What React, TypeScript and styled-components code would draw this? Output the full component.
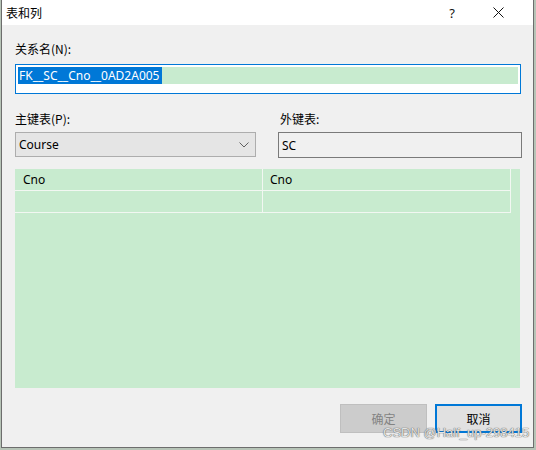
import React from 'react';
import styled, { createGlobalStyle } from 'styled-components';

const GlobalStyle = createGlobalStyle`
  html, body {
    margin: 0;
    padding: 0;
    background: #b7c4b7;
  }
  body {
    font-family: "Noto Sans", "Noto Sans CJK SC", sans-serif;
    font-size: 12px;
    color: #000;
  }
`;

const Window = styled.div`
  position: relative;
  box-sizing: border-box;
  margin-left: 1px;
  width: 533px;
  height: 448px;
  background: #f0f0f0;
  border: 1px solid #6d6d6d;
  border-top: none;
  display: flex;
  flex-direction: column;
`;

const TitleBar = styled.div`
  height: 25px;
  background: #fff;
  display: flex;
  align-items: center;
  padding: 0 12px 0 4px;
`;

const Title = styled.span`
  flex: 1;
  font-family: "Noto Sans CJK SC", sans-serif;
  font-size: 12px;
`;

const TitleButton = styled.div`
  width: 46px;
  height: 25px;
  display: flex;
  align-items: center;
  justify-content: center;
  font-size: 13px;
  color: #111;
`;

const Body = styled.div`
  flex: 1;
  display: flex;
  flex-direction: column;
  padding: 16px 12px 0 13px;
`;

const Label = styled.div<{ $indent?: number }>`
  font-family: "Noto Sans CJK SC", sans-serif;
  font-size: 12px;
  line-height: 16px;
  padding-left: ${p => p.$indent ?? 0}px;
`;

const NameInput = styled.div`
  box-sizing: border-box;
  margin-top: 7px;
  width: 506px;
  height: 30px;
  border: 1px solid #0078d7;
  background: #fff;
  padding: 2px 2px 0 2px;
`;

const HighlightLine = styled.div`
  height: 17px;
  background: #c8ebcf;
  display: flex;
`;

const Selection = styled.span`
  background: #0078d7;
  color: #fff;
  font-size: 12px;
  line-height: 17px;
  padding: 0 3px 0 1px;
`;

const KeyRow = styled.div`
  display: grid;
  grid-template-columns: 241px 244px;
  column-gap: 22px;
`;

const KeyLabels = styled(KeyRow)`
  margin-top: 17px;
`;

const KeyControls = styled(KeyRow)`
  margin-top: 5px;
`;

const Combo = styled.div`
  box-sizing: border-box;
  height: 25px;
  background: #e5e5e5;
  border: 1px solid #adadad;
  display: flex;
  align-items: center;
  justify-content: space-between;
  padding: 0 6px 0 3px;
  font-size: 12px;
`;

const ReadOnlyBox = styled.div`
  box-sizing: border-box;
  height: 26px;
  background: #f0f0f0;
  border: 1px solid #7a7a7a;
  display: flex;
  align-items: center;
  padding-left: 3px;
  font-size: 12px;
`;

const GridArea = styled.div`
  margin-top: 11px;
  width: 505px;
  height: 219px;
  background: #c8ebcf;
`;

const GridTable = styled.div`
  width: 497px;
  display: grid;
  grid-template-columns: 248px 248px;
`;

const Cell = styled.div<{ $last?: boolean }>`
  height: 21px;
  border-bottom: 1px solid #f2f7f2;
  border-right: 1px solid #f2f7f2;
  display: flex;
  align-items: center;
  padding-left: ${p => (p.$last ? 7 : 8)}px;
  font-size: 12px;
  line-height: 16px;
`;

const ButtonRow = styled.div`
  margin-top: 16px;
  display: flex;
  justify-content: flex-end;
  gap: 8px;
  width: 507px;
`;

const DialogButton = styled.div<{ $disabled?: boolean; $focused?: boolean }>`
  box-sizing: border-box;
  width: 87px;
  height: 29px;
  display: flex;
  align-items: center;
  justify-content: center;
  font-family: "Noto Sans CJK SC", sans-serif;
  font-size: 12px;
  line-height: 14px;
  background: ${p => (p.$disabled ? '#cccccc' : '#e1e1e1')};
  color: ${p => (p.$disabled ? '#838383' : '#000')};
  border: ${p => (p.$focused ? '2px solid #0078d7' : '1px solid #bfbfbf')};
`;

const Watermark = styled.div`
  position: absolute;
  left: 381px;
  top: 427px;
  font-family: "Liberation Sans", Arial, sans-serif;
  font-size: 13px;
  line-height: 12px;
  color: #e4e4e4;
  text-shadow: 0 0 1px #555, 0 0 1px #777;
  white-space: nowrap;
  pointer-events: none;
`;

const Chevron = () => (
  <svg width="10" height="6" viewBox="0 0 10 6">
    <polyline points="0.5,0.5 5,5 9.5,0.5" fill="none" stroke="#606060" strokeWidth="1" />
  </svg>
);

const CloseIcon = () => (
  <svg width="11" height="11" viewBox="0 0 11 11">
    <path d="M0.5 0.5 L10.5 10.5 M10.5 0.5 L0.5 10.5" stroke="#111" strokeWidth="1" />
  </svg>
);

export default function App() {
  return (
    <>
      <GlobalStyle />
      <Window>
        <TitleBar>
          <Title>表和列</Title>
          <TitleButton>?</TitleButton>
          <TitleButton>
            <CloseIcon />
          </TitleButton>
        </TitleBar>
        <Body>
          <Label>关系名(N):</Label>
          <NameInput>
            <HighlightLine>
              <Selection>FK__SC__Cno__0AD2A005</Selection>
            </HighlightLine>
          </NameInput>
          <KeyLabels>
            <Label>主键表(P):</Label>
            <Label $indent={2}>外键表:</Label>
          </KeyLabels>
          <KeyControls>
            <Combo>
              <span>Course</span>
              <Chevron />
            </Combo>
            <ReadOnlyBox>SC</ReadOnlyBox>
          </KeyControls>
          <GridArea>
            <GridTable>
              <Cell>Cno</Cell>
              <Cell $last>Cno</Cell>
              <Cell />
              <Cell $last />
            </GridTable>
          </GridArea>
          <ButtonRow>
            <DialogButton $disabled>确定</DialogButton>
            <DialogButton $focused>取消</DialogButton>
          </ButtonRow>
        </Body>
        <Watermark>CSDN @Half_up-298415</Watermark>
      </Window>
    </>
  );
}
